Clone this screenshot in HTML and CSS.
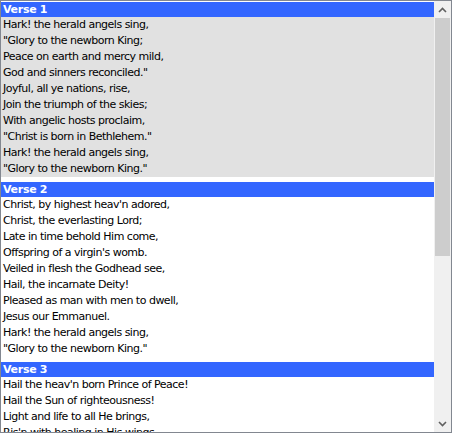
FILE: index.html
```html
<!DOCTYPE html>
<html>
<head>
<meta charset="utf-8">
<link rel="stylesheet" href="styles.css">
</head>
<body>
<div class="box">
  <div class="list">
    <div class="item selected">
      <div class="head">Verse 1</div>
      <div class="lines">
        <div>Hark! the herald angels sing,</div>
        <div>"Glory to the newborn King;</div>
        <div>Peace on earth and mercy mild,</div>
        <div>God and sinners reconciled."</div>
        <div>Joyful, all ye nations, rise,</div>
        <div>Join the triumph of the skies;</div>
        <div>With angelic hosts proclaim,</div>
        <div>"Christ is born in Bethlehem."</div>
        <div>Hark! the herald angels sing,</div>
        <div>"Glory to the newborn King."</div>
      </div>
    </div>
    <div class="item">
      <div class="head">Verse 2</div>
      <div class="lines">
        <div>Christ, by highest heav'n adored,</div>
        <div>Christ, the everlasting Lord;</div>
        <div>Late in time behold Him come,</div>
        <div>Offspring of a virgin's womb.</div>
        <div>Veiled in flesh the Godhead see,</div>
        <div>Hail, the incarnate Deity!</div>
        <div>Pleased as man with men to dwell,</div>
        <div>Jesus our Emmanuel.</div>
        <div>Hark! the herald angels sing,</div>
        <div>"Glory to the newborn King."</div>
      </div>
    </div>
    <div class="item">
      <div class="head">Verse 3</div>
      <div class="lines">
        <div>Hail the heav'n born Prince of Peace!</div>
        <div>Hail the Sun of righteousness!</div>
        <div>Light and life to all He brings,</div>
        <div>Ris'n with healing in His wings.</div>
        <div>Mild He lays His glory by,</div>
      </div>
    </div>
  </div>
  <div class="scrollbar">
    <div class="btn">
      <svg width="9" height="6" viewBox="0 0 9 6"><path d="M1 5 L4.5 1.5 L8 5" fill="none" stroke="#606060" stroke-width="1.6"/></svg>
    </div>
    <div class="track">
      <div class="thumb"></div>
    </div>
    <div class="btn">
      <svg width="9" height="6" viewBox="0 0 9 6"><path d="M1 1 L4.5 4.5 L8 1" fill="none" stroke="#606060" stroke-width="1.6"/></svg>
    </div>
  </div>
</div>
</body>
</html>
```
FILE: styles.css
```css
html, body {
  margin: 0;
  padding: 0;
  background: #ffffff;
}
.box {
  width: 452px;
  height: 433px;
  box-sizing: border-box;
  border: 1px solid #828790;
  display: flex;
  overflow: hidden;
  font-family: "DejaVu Sans", Tahoma, sans-serif;
  font-size: 11px;
  letter-spacing: -0.5px;
  color: #000;
}
.list {
  flex: 1;
  overflow: hidden;
  display: flex;
  flex-direction: column;
  gap: 5px;
  padding-top: 1px;
}
.item {
  flex: none;
}
.head {
  background: #3366ff;
  color: #fff;
  font-weight: bold;
  letter-spacing: -0.3px;
  height: 15px;
  line-height: 15px;
  padding-left: 2px;
}
.lines div {
  height: 16px;
  line-height: 16px;
  padding-left: 2px;
  white-space: nowrap;
}
.selected .lines {
  background: #e1e1e1;
}
.scrollbar {
  width: 17px;
  background: #f0f0f0;
  display: flex;
  flex-direction: column;
}
.btn {
  height: 17px;
  display: flex;
  align-items: center;
  justify-content: center;
}
.track {
  flex: 1;
  padding: 0 1px;
}
.thumb {
  height: 238px;
  background: #cdcdcd;
}
```
